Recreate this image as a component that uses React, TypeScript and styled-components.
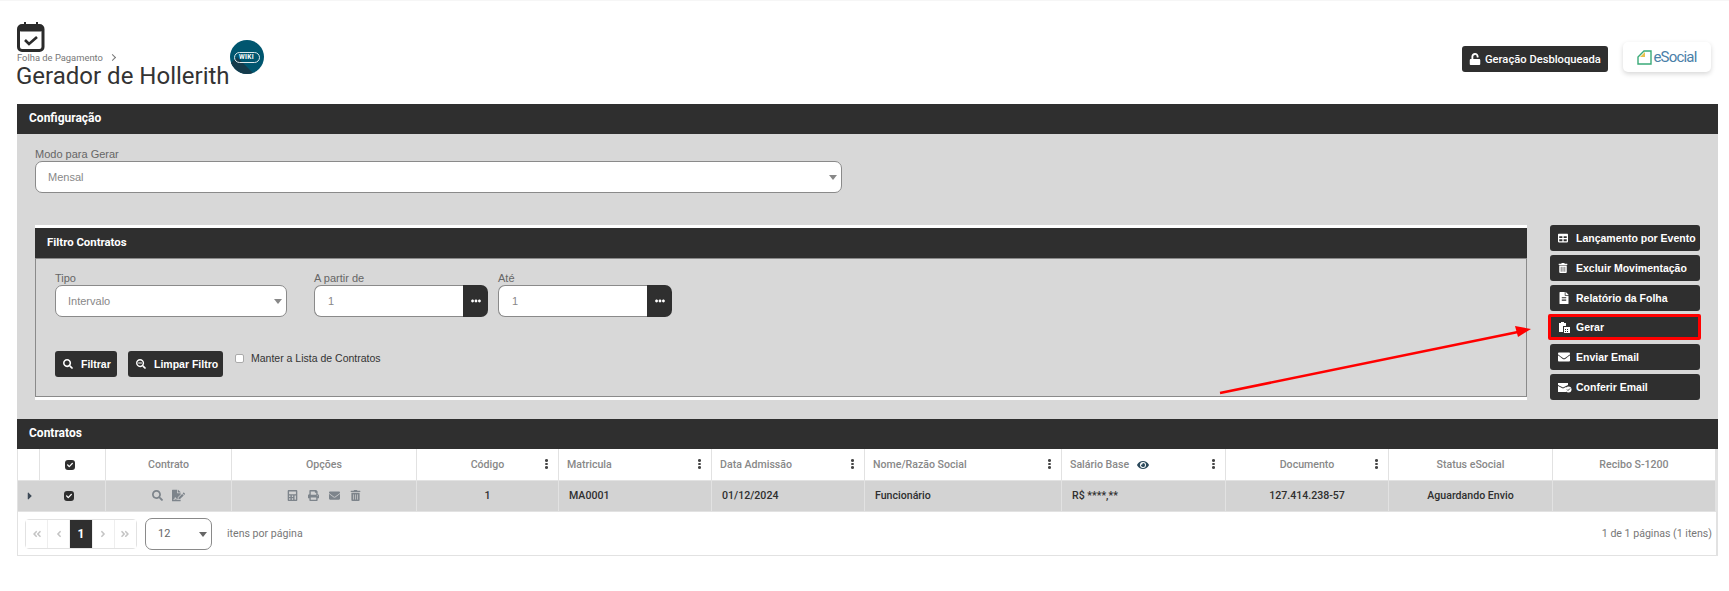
import React from "react";
import styled, { createGlobalStyle } from "styled-components";
import { FaUnlock, FaFileAlt, FaEnvelope, FaSearch, FaSearchMinus, FaCalculator, FaPrint, FaTrashAlt, FaFileSignature, FaCaretRight, FaCheck, FaEye, FaEllipsisH, FaAngleLeft, FaAngleRight, FaAngleDoubleLeft, FaAngleDoubleRight, FaTable } from "react-icons/fa";

const Global = createGlobalStyle`
  html, body { margin: 0; padding: 0; background: #fff; }
  body { font-family: Roboto, "Liberation Sans", sans-serif; overflow: hidden; }
  * { box-sizing: border-box; }
`;

const DARK = "#2f2f2f";

const Page = styled.div`
  position: relative;
  width: 1729px;
  height: 591px;
  padding: 0 11px 0 17px;
  border-top: 1px solid #f6f6f6;
`;
const Header = styled.header`
  display: flex;
  height: 103px;
  padding-top: 21px;
`;
const TitleBlock = styled.div`
  display: flex;
  flex-direction: column;
`;
const Crumb = styled.div`
  display: flex;
  align-items: center;
  gap: 7px;
  height: 11px;
  font-size: 9.4px;
  line-height: 11px;
  color: #777;
`;
const CrumbArrow = styled.span`
  width: 5px;
  height: 5px;
  border-top: 1px solid #777;
  border-right: 1px solid #777;
  transform: rotate(45deg);
`;
const Title = styled.h1`
  margin: -2px 0 0 -1px;
  font-size: 24px;
  line-height: 30px;
  font-weight: 400;
  color: #333;
  white-space: nowrap;
`;
const WikiBadge = styled.div`
  position: relative;
  overflow: hidden;
  flex: none;
  width: 34px;
  height: 34px;
  margin: 18px 0 0 0;
  border-radius: 50%;
  background: #00566f;
  display: flex;
  align-items: center;
  justify-content: center;
  &::after {
    content: "";
    position: absolute;
    left: 7px;
    top: 17px;
    width: 40px;
    height: 24px;
    background: #153b4c;
    transform: rotate(45deg);
    transform-origin: 0 0;
  }
`;
const WikiPill = styled.span`
  position: relative;
  z-index: 1;
  width: 26px;
  height: 11px;
  border: 1px solid #dfe9ec;
  border-radius: 6px;
  font-size: 6.5px;
  font-weight: 700;
  line-height: 9px;
  letter-spacing: 0.4px;
  text-align: center;
  color: #fff;
`;
const HeaderActions = styled.div`
  display: flex;
  align-items: flex-start;
  margin-left: auto;
  padding: 20px 7px 0 0;
  gap: 15px;
`;
const LockButton = styled.button`
  display: flex;
  align-items: center;
  gap: 4px;
  width: 146px;
  height: 26px;
  margin-top: 4px;
  padding: 0 0 0 7px;
  border: 0;
  border-radius: 3px;
  background: ${DARK};
  color: #fff;
  font: 500 11.2px Roboto, sans-serif;
  white-space: nowrap;
`;
const EsocialCard = styled.div`
  display: flex;
  align-items: center;
  justify-content: center;
  gap: 1px;
  width: 88px;
  height: 30px;
  border-radius: 5px;
  background: #fff;
  box-shadow: 0 2px 5px rgba(0, 0, 0, 0.16);
`;
const EsocialText = styled.span`
  font: 400 15px Roboto, sans-serif;
  letter-spacing: -0.8px;
  color: #4a80a8;
`;
const Bar = styled.div`
  display: flex;
  align-items: center;
  height: 30px;
  padding: 0 0 2px 12px;
  background: ${DARK};
  color: #fff;
  font-size: 12px;
  font-weight: 700;
`;
const PanelBar = styled(Bar)`
  font-size: 11.4px;
`;
const ConfigBody = styled.section`
  height: 285px;
  padding: 14px 18px 0;
  background: #d8d8d8;
`;
const FieldLabel = styled.label`
  display: block;
  height: 13px;
  font: 11px/13px "Liberation Sans", Arial, sans-serif;
  color: #666;
`;
const SelectBox = styled.div<{ $w: number }>`
  position: relative;
  display: flex;
  align-items: center;
  width: ${(p) => p.$w}px;
  height: 32px;
  padding-left: 12px;
  border: 1px solid #8a8a8a;
  border-radius: 7px;
  background: #fff;
  font: 11px "Liberation Sans", Arial, sans-serif;
  color: #888;
  &::after {
    content: "";
    position: absolute;
    right: 4px;
    top: 13px;
    border: 4.5px solid transparent;
    border-top: 5px solid #888;
  }
`;
const ModeField = styled.div`
  width: 807px;
`;
const LowerRow = styled.div`
  display: flex;
  margin-top: 32px;
`;
const FilterPanel = styled.div`
  width: 1492px;
  height: 175px;
  border-top: 3px solid #fff;
  border-bottom: 3px solid #fff;
`;
const FilterBody = styled.div`
  height: 139px;
  padding: 13px 19px 0;
  border: 1px solid #8a8a8a;
`;
const FieldRow = styled.div`
  display: flex;
`;
const Field = styled.div<{ $ml: number }>`
  margin-left: ${(p) => p.$ml}px;
`;
const NumberGroup = styled.div`
  display: flex;
  width: 174px;
  height: 32px;
`;
const NumberInput = styled.div`
  flex: 1;
  display: flex;
  align-items: center;
  padding-left: 13px;
  border: 1px solid #8a8a8a;
  border-right: 0;
  border-radius: 7px 0 0 7px;
  background: #fff;
  font: 11px "Liberation Sans", Arial, sans-serif;
  color: #888;
`;
const DotsButton = styled.button`
  display: flex;
  align-items: center;
  justify-content: center;
  width: 25px;
  padding: 0;
  border: 0;
  border-radius: 0 7px 7px 0;
  background: ${DARK};
  color: #fff;
  font-size: 10px;
`;
const FilterActions = styled.div`
  display: flex;
  margin-top: 34px;
`;
const DarkButton = styled.button<{ $w: number; $hi?: boolean; $ml?: number }>`
  display: flex;
  align-items: center;
  flex: none;
  width: ${(p) => p.$w}px;
  height: 26px;
  margin-left: ${(p) => p.$ml ?? 0}px;
  padding: 0 0 0 8px;
  border: 0;
  border-radius: 3px;
  background: ${DARK};
  color: #fff;
  font: 700 10.5px "Liberation Sans", Arial, sans-serif;
  white-space: nowrap;
  ${(p) =>
    p.$hi &&
    "width: 153px; margin: -1px -1px 0 -2px; padding-left: 7px; border: 3px solid #f00; border-radius: 2px;"}
`;
const IconSlot = styled.span<{ $w: number }>`
  display: flex;
  align-items: center;
  flex: none;
  width: ${(p) => p.$w}px;
  font-size: 10px;
`;
const KeepList = styled.label`
  display: flex;
  align-items: center;
  gap: 7px;
  height: 13px;
  margin: 1px 0 0 12px;
  font: 10.5px/13px "Liberation Sans", Arial, sans-serif;
  color: #333;
  white-space: nowrap;
`;
const CheckBox = styled.span`
  width: 9px;
  height: 9px;
  border: 1px solid #aaa;
  border-radius: 2px;
  background: #fff;
`;
const SideActions = styled.div`
  display: flex;
  flex-direction: column;
  gap: 4px;
  width: 150px;
  margin-left: 23px;
`;
const TableFrame = styled.div`
  height: 107px;
  border: 1px solid #e2e2e2;
  border-top: 0;
  border-right-width: 2px;
`;
const Grid = `
  display: grid;
  grid-template-columns: 22px 66px 126px 185px 142px 153px 153px 197px 164px 163px 164px 163px;
`;
const HeadRow = styled.div`
  ${Grid}
  height: 32px;
  border-bottom: 1px solid #e2e2e2;
`;
const HeadCell = styled.div<{ $left?: boolean }>`
  position: relative;
  display: flex;
  align-items: center;
  justify-content: ${(p) => (p.$left ? "flex-start" : "center")};
  padding-left: ${(p) => (p.$left ? "8px" : "0")};
  border-right: 1px solid #e2e2e2;
  font-size: 10.6px;
  font-weight: 500;
  color: #888;
  white-space: nowrap;
`;
const CheckHeadCell = styled(HeadCell)`
  padding-right: 5px;
`;
const KebabIcon = styled.span`
  position: absolute;
  right: 10px;
  top: 10px;
  display: flex;
  flex-direction: column;
  gap: 1px;
  i { width: 3px; height: 2.6px; border-radius: 50%; background: #444; display: block; }
`;
const DataRow = styled.div`
  ${Grid}
  height: 31px;
  background: #d3d3d3;
  border-bottom: 1px solid #e2e2e2;
`;
const DataCell = styled.div<{ $left?: boolean }>`
  display: flex;
  align-items: center;
  justify-content: ${(p) => (p.$left ? "flex-start" : "center")};
  padding: 0 0 1px ${(p) => (p.$left ? "10px" : "0")};
  border-right: 1px solid #e2e2e2;
  font-size: 10.6px;
  font-weight: 500;
  color: #2f2f2f;
  white-space: nowrap;
`;
const ExpanderCell = styled.div`
  display: flex;
  align-items: center;
  justify-content: flex-start;
  padding-left: 6px;
  color: #3d4a57;
  font-size: 12px;
`;
const DarkCheck = styled.span`
  display: flex;
  align-items: center;
  justify-content: center;
  width: 10px;
  height: 10px;
  border-radius: 3px;
  background: #2f2f2f;
  color: #fff;
  font-size: 6px;
`;
const RowCheckCell = styled(DataCell)`
  justify-content: flex-start;
  padding-left: 24px;
`;
const ActionIcons = styled.div<{ $gap: number }>`
  display: flex;
  align-items: center;
  gap: ${(p) => p.$gap}px;
  font-size: 11px;
  color: #7d848b;
`;
const PagerBar = styled.div`
  display: flex;
  align-items: center;
  height: 43px;
  padding: 0 4px 0 7px;
  font-size: 10.6px;
  color: #777;
`;
const Pager = styled.div`
  display: flex;
  width: 112px;
  height: 30px;
  border: 1px solid #e2e2e2;
  border-radius: 4px;
`;
const PageCell = styled.span<{ $on?: boolean }>`
  display: flex;
  align-items: center;
  justify-content: center;
  flex: 1;
  border-right: 1px solid #eee;
  background: ${(p) => (p.$on ? DARK : "#fff")};
  color: ${(p) => (p.$on ? "#fff" : "#c4c4c4")};
  font-size: ${(p) => (p.$on ? "12px" : "10px")};
  font-weight: 700;
  &:last-child { border-right: 0; }
`;
const PageSize = styled.div`
  position: relative;
  display: flex;
  align-items: center;
  width: 67px;
  height: 32px;
  margin-left: 8px;
  padding-left: 12px;
  border: 1px solid #8a8a8a;
  border-radius: 7px;
  font-size: 11px;
  color: #666;
  &::after {
    content: "";
    position: absolute;
    right: 4px;
    top: 13px;
    border: 4.5px solid transparent;
    border-top: 5px solid #666;
  }
`;
const PerPage = styled.span`
  margin-left: 15px;
`;
const PageInfo = styled.span`
  margin-left: auto;
`;
const SalaryHead = styled.span`
  display: flex;
  align-items: center;
  gap: 8px;
`;
const ArrowLayer = styled.svg`
  position: absolute;
  left: 0;
  top: 0;
  pointer-events: none;
`;

const CalendarLogo = () => (
  <svg width="28" height="30" viewBox="0 0 28 30">
    <path d="M7 0h2v4H7zM19 0h2v4h-2z" fill="#2b2b2b" />
    <rect x="1.5" y="3.5" width="24.5" height="25" rx="3.5" fill="#fff" stroke="#2b2b2b" strokeWidth="3" />
    <rect x="1.5" y="3.5" width="24.5" height="6" rx="2.5" fill="#2b2b2b" />
    <path d="M8 18l4 4 8-7" fill="none" stroke="#2b2b2b" strokeWidth="2.6" />
  </svg>
);
const EsocialIcon = () => (
  <svg width="15" height="15" viewBox="0 0 15 15">
    <path d="M1 14V7l6-6h7v13z" fill="#fff" stroke="#3aaa78" strokeWidth="1.4" />
    <path d="M3 7l5-5v5z" fill="#e8c24c" />
  </svg>
);
const ClipboardCalendar = () => (
  <svg width="12" height="11" viewBox="0 0 12 11" fill="#fff">
    <path d="M1 1h2V0h3v1h2v3H5v6H1z" />
    <path d="M6 5h6v6H6z" />
    <path d="M7 7h1v1H7zM9 7h1v1H9zM7 9h1v1H7zM9 9h1v1H9z" fill="#2f2f2f" />
  </svg>
);
const MailCheck = () => (
  <svg width="14" height="11" viewBox="0 0 14 11" fill="#fff">
    <path d="M0 1h10v2L5 5.5 0 3zM0 4l5 2.5L8 5v5H0z" />
    <circle cx="10.5" cy="7.5" r="3" />
    <path d="M9 7.5l1 1 2-2" stroke="#2f2f2f" fill="none" strokeWidth="0.9" />
  </svg>
);
const Kebab = () => (
  <KebabIcon><i /><i /><i /></KebabIcon>
);

const heads: [string, boolean][] = [
  ["Código", false],
  ["Matricula", true],
  ["Data Admissão", true],
  ["Nome/Razão Social", true],
];

export default function App() {
  return (
    <Page>
      <Global />
      <Header>
        <TitleBlock>
          <CalendarLogo />
          <Crumb>Folha de Pagamento <CrumbArrow /></Crumb>
          <Title>Gerador de Hollerith</Title>
        </TitleBlock>
        <WikiBadge><WikiPill>WIKI</WikiPill></WikiBadge>
        <HeaderActions>
          <LockButton><FaUnlock size={12} /> Geração Desbloqueada</LockButton>
          <EsocialCard><EsocialIcon /><EsocialText>eSocial</EsocialText></EsocialCard>
        </HeaderActions>
      </Header>

      <Bar>Configuração</Bar>
      <ConfigBody>
        <ModeField>
          <FieldLabel>Modo para Gerar</FieldLabel>
          <SelectBox $w={807}>Mensal</SelectBox>
        </ModeField>
        <LowerRow>
          <FilterPanel>
            <PanelBar>Filtro Contratos</PanelBar>
            <FilterBody>
              <FieldRow>
                <div>
                  <FieldLabel>Tipo</FieldLabel>
                  <SelectBox $w={232}>Intervalo</SelectBox>
                </div>
                <Field $ml={27}>
                  <FieldLabel>A partir de</FieldLabel>
                  <NumberGroup><NumberInput>1</NumberInput><DotsButton><FaEllipsisH /></DotsButton></NumberGroup>
                </Field>
                <Field $ml={10}>
                  <FieldLabel>Até</FieldLabel>
                  <NumberGroup><NumberInput>1</NumberInput><DotsButton><FaEllipsisH /></DotsButton></NumberGroup>
                </Field>
              </FieldRow>
              <FilterActions>
                <DarkButton $w={62}><IconSlot $w={18}><FaSearch /></IconSlot>Filtrar</DarkButton>
                <DarkButton $w={95} $ml={11}><IconSlot $w={18}><FaSearchMinus /></IconSlot>Limpar Filtro</DarkButton>
                <KeepList><CheckBox />Manter a Lista de Contratos</KeepList>
              </FilterActions>
            </FilterBody>
          </FilterPanel>
          <SideActions>
            <DarkButton $w={150}><IconSlot $w={18}><FaTable /></IconSlot>Lançamento por Evento</DarkButton>
            <DarkButton $w={150}><IconSlot $w={18}><FaTrashAlt /></IconSlot>Excluir Movimentação</DarkButton>
            <DarkButton $w={150}><IconSlot $w={18}><FaFileAlt size={12} /></IconSlot>Relatório da Folha</DarkButton>
            <DarkButton $w={150} $hi><IconSlot $w={18}><ClipboardCalendar /></IconSlot>Gerar</DarkButton>
            <DarkButton $w={150}><IconSlot $w={18}><FaEnvelope size={12} /></IconSlot>Enviar Email</DarkButton>
            <DarkButton $w={150}><IconSlot $w={18}><MailCheck /></IconSlot>Conferir Email</DarkButton>
          </SideActions>
        </LowerRow>
      </ConfigBody>

      <Bar>Contratos</Bar>
      <TableFrame>
        <HeadRow>
          <HeadCell />
          <CheckHeadCell><DarkCheck><FaCheck /></DarkCheck></CheckHeadCell>
          <HeadCell>Contrato</HeadCell>
          <HeadCell>Opções</HeadCell>
          {heads.map(([t, left]) => (
            <HeadCell key={t} $left={left}>{t}<Kebab /></HeadCell>
          ))}
          <HeadCell $left><SalaryHead>Salário Base <FaEye size={12} color="#2c4a5c" /></SalaryHead><Kebab /></HeadCell>
          <HeadCell>Documento<Kebab /></HeadCell>
          <HeadCell>Status eSocial</HeadCell>
          <HeadCell>Recibo S-1200</HeadCell>
        </HeadRow>
        <DataRow>
          <ExpanderCell><FaCaretRight /></ExpanderCell>
          <RowCheckCell><DarkCheck><FaCheck /></DarkCheck></RowCheckCell>
          <DataCell><ActionIcons $gap={9}><FaSearch /><FaFileSignature size={13} /></ActionIcons></DataCell>
          <DataCell><ActionIcons $gap={10}><FaCalculator /><FaPrint /><FaEnvelope /><FaTrashAlt /></ActionIcons></DataCell>
          <DataCell>1</DataCell>
          <DataCell $left>MA0001</DataCell>
          <DataCell $left>01/12/2024</DataCell>
          <DataCell $left>Funcionário</DataCell>
          <DataCell $left>R$ ****,**</DataCell>
          <DataCell>127.414.238-57</DataCell>
          <DataCell>Aguardando Envio</DataCell>
          <DataCell />
        </DataRow>
        <PagerBar>
          <Pager>
            <PageCell><FaAngleDoubleLeft /></PageCell>
            <PageCell><FaAngleLeft /></PageCell>
            <PageCell $on>1</PageCell>
            <PageCell><FaAngleRight /></PageCell>
            <PageCell><FaAngleDoubleRight /></PageCell>
          </Pager>
          <PageSize>12</PageSize>
          <PerPage>itens por página</PerPage>
          <PageInfo>1 de 1 páginas (1 itens)</PageInfo>
        </PagerBar>
      </TableFrame>

      <ArrowLayer width="1729" height="591" viewBox="0 0 1729 591">
        <path d="M1220 392L1518 331" stroke="#f00" strokeWidth="2.6" fill="none" />
        <path d="M1531 328L1515 325L1518 336z" fill="#f00" />
      </ArrowLayer>
    </Page>
  );
}
